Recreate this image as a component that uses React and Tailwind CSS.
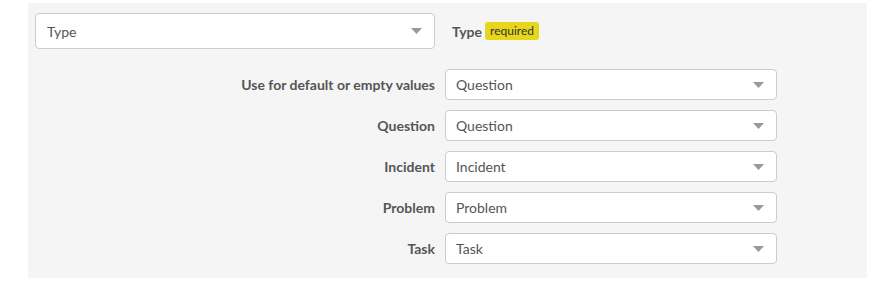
import React from 'react';

const rows = [
  { label: 'Use for default or empty values', value: 'Question' },
  { label: 'Question', value: 'Question' },
  { label: 'Incident', value: 'Incident' },
  { label: 'Problem', value: 'Problem' },
  { label: 'Task', value: 'Task' },
];

function Caret({ className }) {
  return (
    <svg width="11" height="6" viewBox="0 0 11 6" className={className}>
      <path d="M0 0 L11 0 L5.5 6 Z" fill="#999999" />
    </svg>
  );
}

function SelectBox({ value, className, padLeft }) {
  return (
    <div
      className={`flex items-center justify-between bg-white border border-[#cccccc] rounded-[4px] text-[14px] text-[#555555] ${className}`}
    >
      <span className={padLeft}>{value}</span>
      <Caret className="mr-[12px]" />
    </div>
  );
}

export default function App() {
  return (
    <div className="min-h-screen bg-white pt-[3px] font-['Lato','Liberation_Sans',sans-serif]">
      <div className="ml-[28px] w-[839px] h-[275px] bg-[#f5f5f5] pl-[7px] pt-[10px]">
        {/* Mapping field */}
        <div className="flex items-center">
          <SelectBox value="Type" className="w-[400px] h-[36px]" padLeft="pl-[11px]" />
          <div className="ml-[17px] flex items-center gap-[3px]">
            <span className="text-[14px] font-bold text-[#555555]">Type</span>
            <span className="bg-[#e6d71c] text-[#333333] text-[12px] leading-[18px] px-[5px] rounded-[3px]">
              required
            </span>
          </div>
        </div>

        {/* Value mappings */}
        <div className="mt-[20px] flex flex-col gap-[10px]">
          {rows.map((row, i) => (
            <div key={i} className="flex items-center">
              <div className="w-[400px] text-right text-[14px] font-bold text-[#555555]">
                {row.label}
              </div>
              <SelectBox
                value={row.value}
                className="ml-[10px] w-[332px] h-[31px]"
                padLeft="pl-[10px]"
              />
            </div>
          ))}
        </div>
      </div>
    </div>
  );
}
